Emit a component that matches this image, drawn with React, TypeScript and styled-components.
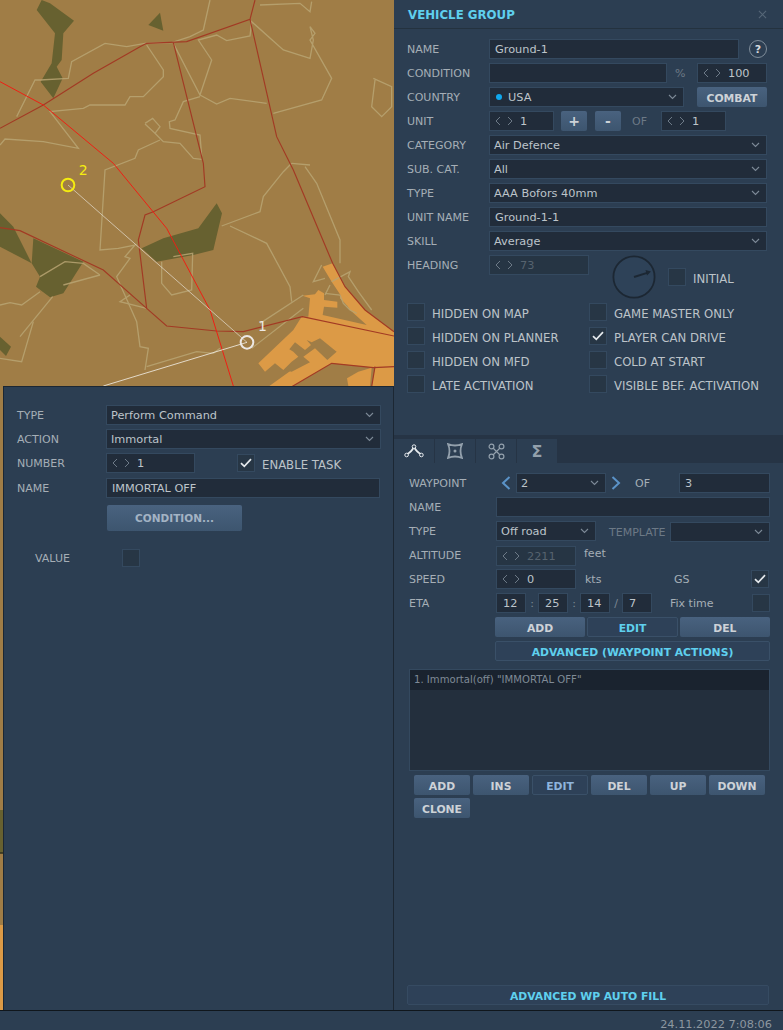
import styled, { createGlobalStyle } from 'styled-components'

const GlobalStyle = createGlobalStyle`
  html, body {
    margin: 0;
    height: 100%;
    background: #2c3e52;
    overflow: hidden;
  }
  body, input, select, button {
    font-family: "DejaVu Sans", sans-serif;
  }
`

const Chevron = () => (
  <svg width="9" height="6" viewBox="0 0 9 6">
    <path d="M1 1 L4.5 4.5 L8 1" fill="none" stroke="#7d8a97" strokeWidth="1.1" />
  </svg>
)

const Tick = () => (
  <svg width="12" height="10" viewBox="0 0 12 10">
    <path d="M1 5.2 L4.3 8.4 L11 1.2" fill="none" stroke="#e4e8ec" strokeWidth="1.7" />
  </svg>
)

const SpinArrows = () => (
  <svg width="18" height="10" viewBox="0 0 18 10">
    <path d="M5 1 L1 5 L5 9 M13 1 L17 5 L13 9" fill="none" stroke="#6d7a87" strokeWidth="1" />
  </svg>
)

function Select({ w, children, dot }: { w: number; children?: React.ReactNode; dot?: boolean }) {
  return (
    <SelectBox $w={w}>
      {dot && <Dot />}
      <span>{children}</span>
      <Chevron />
    </SelectBox>
  )
}

function Spin({ w, value, off }: { w: number; value: string; off?: boolean }) {
  return (
    <SpinBox $w={w} $off={off}>
      <SpinArrows />
      <span>{value}</span>
    </SpinBox>
  )
}

function Check({ on, children }: { on?: boolean; children?: React.ReactNode }) {
  return (
    <CheckLabel>
      <CheckBox>{on && <Tick />}</CheckBox>
      <CheckText>{children}</CheckText>
    </CheckLabel>
  )
}

function MapView() {
  const tan = [
    '630,0 610,90 570,110 515,128 435,130 380,140 315,130 215,185 205,235 120,240 105,240 50,350',
    '440,135 490,210 490,230 430,290 390,290 375,315 270,315 250,325 150,335 235,445 130,425 15,417 0,435',
    '520,130 600,285 635,180 595,120 650,105 680,122 750,108 755,65 850,150 930,175 940,120 930,80 945,100 930,120 995,235 965,300 820,340',
    '600,285 650,312 690,295 800,310',
    '600,290 550,305 525,360 508,365 510,385 600,405 605,470',
    '435,370 458,355 480,380 465,400 435,372',
    '465,400 490,425 540,430 580,475 605,478',
    '480,420 415,450 405,475 315,510 300,750 355,745 405,735 375,770 390,775 350,830 410,965 420,1040 445,1045 435,1110',
    '875,490 930,495',
    '915,500 950,550 1020,720 1020,790',
    '875,490 850,515 790,590 780,635 665,678',
    '690,678 800,730 870,860 875,905',
    '485,785 485,850 515,885 575,870 578,760 520,770',
    '300,825 190,855',
    '120,830 195,785 250,790 300,825',
    '158,890 60,1010',
    '100,965 65,1085 0,1075',
    '0,915 30,908 65,915 120,875',
    '440,925 360,905 390,885',
    '1120,235 1175,260 1175,320 1145,350 1115,320 1125,240',
    '780,15 900,10 930,35 935,5',
    '910,885 780,970',
    '910,925 755,1045',
    '440,1100 590,1055 640,1060 660,1045',
    '965,795 940,845 975,835',
    '995,845 1050,815 1045,830 1075,875 1115,930',
    '975,880 1020,885 1030,910 1050,930 1070,940',
    '990,855 975,885',
  ]
  const darkRed = [
    '0,385 130,315 280,220 420,140 440,130 560,125 750,58 765,0',
    '520,128 610,490 615,560 460,635 435,645 415,720 440,925',
    '750,58 830,410 880,510 998,790 1035,860 1095,930 1182,995',
    '0,683 60,692 310,810 440,925 500,978 650,993 730,995 907,950 1182,1008',
    '875,1160 995,1090 1120,1103 1182,1100',
    '1125,1100 1115,1160',
  ]
  return (
    <MapSvg viewBox="0 0 1182 3030">
      <rect width="1182" height="3030" fill="#a07d46" />
      <g fill="#676130">
        <polygon points="110,30 125,0 150,10 222,62 190,100 185,180 170,200 188,235 160,295 122,245 155,190 165,100" />
        <polygon points="445,75 480,38 490,92" />
        <polygon points="425,745 490,715 595,685 650,610 666,640 640,750 580,765 470,785" />
        <polygon points="0,640 40,680 95,790 0,740" />
        <polygon points="100,715 250,785 190,880 150,892 108,860 120,830 95,790" />
        <polygon points="0,1010 33,1040 18,1068 0,1050" />
        <rect y="2430" width="12" height="130" />
        <rect y="2880" width="12" height="18" />
      </g>
      <rect y="2557" width="12" height="4" fill="#2a2a1c" />
      <g fill="#dc9a46">
        <polygon points="775,1090 880,990 905,950 925,950 930,895 908,887 945,883 955,870 972,880 972,900 1012,905 1012,923 972,920 968,945 1100,975 1050,930 1015,875 995,845 968,800 998,790 1035,860 1095,930 1182,995 1182,1103 1125,1103 995,1090 875,1160 805,1160 875,1110 850,1110 825,1090 795,1115" />
        <polygon points="1025,875 1050,890 1062,895 1040,915 1020,895" />
        <polygon points="1041,1135 1075,1115 1115,1103 1110,1158 1045,1158" />
        <polygon points="1125,1103 1182,1100 1182,1160 1115,1160" />
        <rect y="2775" width="12" height="255" />
      </g>
      <polygon points="868,1048 885,1027 915,1050 933,1035 920,1020 935,1027 960,1015 1010,1055 982,1080 945,1045 910,1070 930,1087 875,1115 850,1110 875,1085 895,1070 880,1055" fill="#a07d46" />
      <g fill="none" stroke="#b9a573" strokeWidth="4" opacity="0.85">
        {tan.map(p => <polyline key={p} points={p} />)}
      </g>
      <g fill="none" stroke="#a23a24" strokeWidth="3.5">
        {darkRed.map(p => <polyline key={p} points={p} />)}
      </g>
      <polyline points="0,245 130,315 340,490 500,685 630,930 700,1158" fill="none" stroke="#ee1f14" strokeWidth="3" />
      <line x1="204" y1="555" x2="741" y2="1027" stroke="#e8e4da" strokeWidth="2" />
      <line x1="310" y1="1158" x2="741" y2="1027" stroke="#f0ece2" strokeWidth="2.5" />
      <circle cx="204" cy="555" r="19" fill="none" stroke="#f4ec10" strokeWidth="6" />
      <circle cx="741" cy="1027" r="19" fill="none" stroke="#ece8e4" strokeWidth="6" />
      <MapLabel x="236" y="524" fill="#f4ec10">2</MapLabel>
      <MapLabel x="774" y="994" fill="#ece8e4">1</MapLabel>
    </MapSvg>
  )
}

export default function App() {
  return (
    <Page>
      <GlobalStyle />
      <Main>
        <MapColumn>
          <MapView />
          <TaskPanel>
            <Row>
              <TaskLabel>TYPE</TaskLabel>
              <Select w={275}>Perform Command</Select>
            </Row>
            <Row>
              <TaskLabel>ACTION</TaskLabel>
              <Select w={275}>Immortal</Select>
            </Row>
            <Row>
              <TaskLabel>NUMBER</TaskLabel>
              <Spin w={89} value="1" />
              <EnableTask>
                <Check on>ENABLE TASK</Check>
              </EnableTask>
            </Row>
            <NameRow>
              <TaskLabel>NAME</TaskLabel>
              <Input $w={274}>IMMORTAL OFF</Input>
            </NameRow>
            <ConditionButton>CONDITION...</ConditionButton>
            <ValueRow>
              <ValueLabel>VALUE</ValueLabel>
              <CheckBox />
            </ValueRow>
          </TaskPanel>
        </MapColumn>

        <Side>
          <Header>
            <Title>VEHICLE GROUP</Title>
            <CloseIcon viewBox="0 0 10 10">
              <path d="M1 1 L9 9 M9 1 L1 9" stroke="#566778" strokeWidth="1.2" />
            </CloseIcon>
          </Header>

          <GroupForm>
            <Row>
              <Label>NAME</Label>
              <Input $w={250}>Ground-1</Input>
              <Help>?</Help>
            </Row>
            <Row>
              <Label>CONDITION</Label>
              <Input $w={178} />
              <Percent>%</Percent>
              <Spin w={70} value="100" />
            </Row>
            <Row>
              <Label>COUNTRY</Label>
              <Select w={195} dot>USA</Select>
              <CombatButton>COMBAT</CombatButton>
            </Row>
            <Row>
              <Label>UNIT</Label>
              <Spin w={65} value="1" />
              <StepButton>+</StepButton>
              <StepButton>-</StepButton>
              <OfLabel>OF</OfLabel>
              <Spin w={65} value="1" />
            </Row>
            <Row>
              <Label>CATEGORY</Label>
              <Select w={278}>Air Defence</Select>
            </Row>
            <Row>
              <Label>SUB. CAT.</Label>
              <Select w={278}>All</Select>
            </Row>
            <Row>
              <Label>TYPE</Label>
              <Select w={278}>AAA Bofors 40mm</Select>
            </Row>
            <Row>
              <Label>UNIT NAME</Label>
              <Input $w={278}>Ground-1-1</Input>
            </Row>
            <Row>
              <Label>SKILL</Label>
              <Select w={278}>Average</Select>
            </Row>
            <HeadingRow>
              <HeadingLeft>
                <Label>HEADING</Label>
                <Spin w={100} value="73" off />
              </HeadingLeft>
              <Dial viewBox="0 0 44 44">
                <circle cx="22" cy="22" r="20.6" fill="#2e4258" stroke="#1c2733" strokeWidth="1.8" />
                <path d="M22 22 L36 17.6" stroke="#1c2733" strokeWidth="2" />
                <path d="M39 16.5 L33.5 15 L35 20.5 Z" fill="#1c2733" />
              </Dial>
              <InitialCheck>
                <Check>INITIAL</Check>
              </InitialCheck>
            </HeadingRow>
            <Options>
              <Check>HIDDEN ON MAP</Check>
              <Check>GAME MASTER ONLY</Check>
              <Check>HIDDEN ON PLANNER</Check>
              <Check on>PLAYER CAN DRIVE</Check>
              <Check>HIDDEN ON MFD</Check>
              <Check>COLD AT START</Check>
              <Check>LATE ACTIVATION</Check>
              <Check>VISIBLE BEF. ACTIVATION</Check>
            </Options>
          </GroupForm>

          <TabBar>
            <Tab>
              <svg width="20" height="14" viewBox="0 0 20 14">
                <path d="M3 10 Q7 8.5 10 3 Q13 8.5 17 10" fill="none" stroke="#e6eaee" strokeWidth="1.8" />
                <circle cx="2.6" cy="11" r="1.8" fill="#2c3e52" stroke="#e6eaee" />
                <circle cx="10" cy="2.6" r="1.8" fill="#2c3e52" stroke="#e6eaee" />
                <circle cx="17.4" cy="11" r="1.8" fill="#2c3e52" stroke="#e6eaee" />
              </svg>
            </Tab>
            <Tab>
              <svg width="16" height="16" viewBox="0 0 16 16">
                <path d="M1 1 Q8 4 15 1 Q12 8 15 15 Q8 12 1 15 Q4 8 1 1 Z" fill="none" stroke="#93a0ac" strokeWidth="1.8" />
                <circle cx="8" cy="8" r="1.5" fill="#93a0ac" />
              </svg>
            </Tab>
            <Tab>
              <svg width="17" height="17" viewBox="0 0 17 17">
                <path d="M5 5 L12 12 M12 5 L5 12" stroke="#93a0ac" strokeWidth="1.2" />
                <circle cx="3.5" cy="3.5" r="2.4" fill="none" stroke="#93a0ac" strokeWidth="1.2" />
                <circle cx="13.5" cy="3.5" r="2.4" fill="none" stroke="#93a0ac" strokeWidth="1.2" />
                <circle cx="3.5" cy="13.5" r="2.4" fill="none" stroke="#93a0ac" strokeWidth="1.2" />
                <circle cx="13.5" cy="13.5" r="2.4" fill="none" stroke="#93a0ac" strokeWidth="1.2" />
              </svg>
            </Tab>
            <Tab>
              <Sigma>Σ</Sigma>
            </Tab>
          </TabBar>

          <WaypointForm>
            <Row>
              <WpLabel>WAYPOINT</WpLabel>
              <NavArrow viewBox="0 0 10 14" $prev>
                <path d="M8.5 1 L2 7 L8.5 13" fill="none" stroke="#5b93c8" strokeWidth="2" />
              </NavArrow>
              <Select w={90}>2</Select>
              <NavArrow viewBox="0 0 10 14">
                <path d="M1.5 1 L8 7 L1.5 13" fill="none" stroke="#5b93c8" strokeWidth="2" />
              </NavArrow>
              <WpOf>OF</WpOf>
              <Input $w={91}>3</Input>
            </Row>
            <Row>
              <WpLabel>NAME</WpLabel>
              <Input $w={274} />
            </Row>
            <Row>
              <WpLabel>TYPE</WpLabel>
              <Select w={100}>Off road</Select>
              <Template>TEMPLATE</Template>
              <TemplateSelect>
                <Select w={100} />
              </TemplateSelect>
            </Row>
            <Row>
              <WpLabel>ALTITUDE</WpLabel>
              <AltitudeSpin>
                <Spin w={80} value="2211" off />
              </AltitudeSpin>
              <Feet>feet</Feet>
            </Row>
            <Row>
              <WpLabel>SPEED</WpLabel>
              <Spin w={80} value="0" />
              <Kts>kts</Kts>
              <Gs>GS</Gs>
              <CheckBox><Tick /></CheckBox>
            </Row>
            <Row>
              <WpLabel>ETA</WpLabel>
              <TimeField $w={30}>12</TimeField>
              <TimeSep>:</TimeSep>
              <TimeField $w={30}>25</TimeField>
              <TimeSep>:</TimeSep>
              <TimeField $w={30}>14</TimeField>
              <TimeSep>/</TimeSep>
              <TimeField $w={30}>7</TimeField>
              <FixTime>Fix time</FixTime>
              <CheckBox />
            </Row>
            <WpActions>
              <Button>ADD</Button>
              <OutlineButton>EDIT</OutlineButton>
              <Button>DEL</Button>
            </WpActions>
            <AdvancedButton>ADVANCED (WAYPOINT ACTIONS)</AdvancedButton>
            <ActionList>
              <ActionItem>1. Immortal(off) "IMMORTAL OFF"</ActionItem>
            </ActionList>
            <ListButtons>
              <Button>ADD</Button>
              <Button>INS</Button>
              <FlatButton>EDIT</FlatButton>
              <Button>DEL</Button>
              <Button>UP</Button>
              <Button>DOWN</Button>
              <Button>CLONE</Button>
            </ListButtons>
          </WaypointForm>

          <AutoFill>ADVANCED WP AUTO FILL</AutoFill>
        </Side>
      </Main>
      <StatusBar>24.11.2022 7:08:06</StatusBar>
    </Page>
  )
}

// ----- STYLES -----

const Page = styled.div`
  width: 783px;
  height: 1030px;
  overflow: hidden;
  background: #2c3e52;
`

const Main = styled.div`
  display: grid;
  grid-template-columns: 394px 389px;
  height: 1010px;
`

const MapColumn = styled.div`
  position: relative;
  overflow: hidden;
`

const MapSvg = styled.svg`
  display: block;
  width: 394px;
  height: 1010px;
`

const MapLabel = styled.text`
  font-family: "DejaVu Sans", sans-serif;
  font-size: 42px;
`

const TaskPanel = styled.div`
  position: absolute;
  left: 3px;
  top: 386px;
  right: 0;
  bottom: 0;
  box-sizing: border-box;
  padding: 18px 0 0 13px;
  background: #2c3e52;
  border: 1px solid #1c2733;
  border-bottom: none;
  display: flex;
  flex-direction: column;
  gap: 4px;
`

const Row = styled.div`
  display: flex;
  align-items: center;
  height: 20px;
`

const NameRow = styled(Row)`
  margin-top: 1px;
`

const SmallText = styled.div`
  box-sizing: border-box;
  flex: none;
  padding-top: 1px;
  font-size: 11px;
  color: #a5aeb6;
  white-space: nowrap;
`

const DimText = styled(SmallText)`
  color: #6c7986;
`

const Label = styled(SmallText)`
  width: 82px;
`

const TaskLabel = styled(Label)`
  width: 89px;
`

const WpLabel = styled(Label)`
  width: 87px;
`

const Field = styled.div<{ $w: number }>`
  box-sizing: border-box;
  flex: none;
  width: ${({ $w }) => $w}px;
  height: 20px;
  display: flex;
  align-items: center;
  background: #212c3a;
  border: 1px solid #34495f;
  font-size: 11.3px;
  color: #bdc4ca;
  white-space: nowrap;
`

const Input = styled(Field)`
  padding: 1px 0 0 5px;
`

const SelectBox = styled(Field)`
  padding: 0 6px 0 4px;

  span {
    flex: 1;
    padding-top: 1px;
  }
`

const Dot = styled.i`
  width: 6px;
  height: 6px;
  margin: 0 6px 0 2px;
  border-radius: 50%;
  background: #0fa8ee;
`

const SpinBox = styled(Field)<{ $off?: boolean }>`
  padding-left: 5px;
  gap: 7px;
  color: ${({ $off }) => ($off ? '#56636f' : '#bdc4ca')};
  background: ${({ $off }) => ($off ? '#263544' : '#212c3a')};

  span {
    padding-top: 1px;
  }
`

const CheckLabel = styled.label`
  display: flex;
  align-items: center;
  gap: 7px;
  height: 18px;
`

const CheckText = styled.span`
  padding-top: 3px;
  font-size: 11.7px;
  color: #bcc3c9;
  white-space: nowrap;
`

const CheckBox = styled.div`
  box-sizing: border-box;
  flex: none;
  width: 18px;
  height: 18px;
  display: flex;
  align-items: center;
  justify-content: center;
  background: #273645;
  border: 1px solid #34495f;
`

const Button = styled.button`
  box-sizing: border-box;
  height: 20px;
  padding: 2px 0 0;
  border: none;
  border-radius: 2px;
  background: linear-gradient(#49627f, #3d556f);
  font-size: 10.8px;
  font-weight: bold;
  color: #cdd2d7;
`

const OutlineButton = styled(Button)`
  background: #2e4158;
  border: 1px solid #3a5068;
  color: #5fd0ee;
`

const FlatButton = styled(OutlineButton)`
  color: #8eb4dc;
`

const EnableTask = styled.div`
  margin-left: 42px;
`

const ConditionButton = styled(Button)`
  width: 135px;
  height: 26px;
  margin: 3px 0 0 90px;
  padding: 0;
  font-size: 10.5px;
  color: #a3b3c4;
`

const ValueRow = styled.div`
  display: flex;
  align-items: center;
  margin: 14px 0 0 18px;
`

const ValueLabel = styled(SmallText)`
  width: 87px;
`

const Side = styled.div`
  display: flex;
  flex-direction: column;
  background: #2c3e52;
`

const Header = styled.div`
  flex: none;
  height: 28px;
  padding: 0 16px 0 14px;
  display: flex;
  align-items: center;
  justify-content: space-between;
  border-bottom: 1px solid #24323f;
`

const Title = styled.div`
  padding-top: 2px;
  font-size: 11.8px;
  font-weight: bold;
  color: #5fd0ee;
`

const CloseIcon = styled.svg`
  width: 9px;
  height: 9px;
`

const GroupForm = styled.div`
  flex: none;
  box-sizing: border-box;
  height: 406px;
  padding: 10px 16px 0 13px;
  display: flex;
  flex-direction: column;
  gap: 4px;
`

const Help = styled.div`
  box-sizing: border-box;
  width: 18px;
  height: 18px;
  margin-left: 10px;
  display: flex;
  align-items: center;
  justify-content: center;
  border: 1.5px solid #7f8d9a;
  border-radius: 50%;
  font-size: 11px;
  font-weight: bold;
  color: #d5dade;
`

const Percent = styled(DimText)`
  width: 30px;
  padding-left: 8px;
`

const CombatButton = styled(Button)`
  width: 70px;
  margin-left: 13px;
`

const StepButton = styled(Button)`
  width: 26px;
  margin-left: 7px;
  padding: 0;
  font-size: 14px;
  & + & {
    margin-left: 8px;
  }
`

const OfLabel = styled(DimText)`
  width: 40px;
  padding-left: 11px;
`

const HeadingRow = styled.div`
  display: flex;
  align-items: center;
  height: 44px;
`

const HeadingLeft = styled(Row)`
  align-self: flex-start;
`

const Dial = styled.svg`
  width: 44px;
  height: 44px;
  margin-left: 23px;
  flex: none;
`

const InitialCheck = styled.div`
  margin-left: 12px;
`

const Options = styled.div`
  display: grid;
  grid-template-columns: 182px 1fr;
  row-gap: 6px;
`

const TabBar = styled.div`
  flex: none;
  height: 28px;
  box-sizing: border-box;
  padding-top: 4px;
  display: flex;
  background: #263445;
`

const Tab = styled.div`
  box-sizing: border-box;
  width: 41px;
  height: 24px;
  display: flex;
  align-items: center;
  justify-content: center;
  background: #2c3e52;
  border-right: 1px solid #263445;
`

const Sigma = styled.span`
  font-size: 16px;
  font-weight: bold;
  color: #93a0ac;
`

const WaypointForm = styled.div`
  padding: 10px 13px 0 15px;
  display: flex;
  flex-direction: column;
  gap: 4px;
`

const NavArrow = styled.svg<{ $prev?: boolean }>`
  width: 10px;
  height: 14px;
  flex: none;
  margin: ${({ $prev }) => ($prev ? '0 5px 0 5px' : '0 0 0 5px')};
`

const WpOf = styled(SmallText)`
  width: 58px;
  padding-left: 14px;
`

const Template = styled(DimText)`
  width: 74px;
  padding-left: 13px;
  margin-top: 2px;
`

const TemplateSelect = styled.div`
  margin-top: 1px;
`

const AltitudeSpin = styled.div`
  margin-top: 1px;
`

const Feet = styled(SmallText)`
  margin: -4px 0 0 8px;
`

const Kts = styled(SmallText)`
  width: 98px;
  padding-left: 9px;
`

const Gs = styled(SmallText)`
  width: 77px;
`

const TimeField = styled(Input)`
  padding-left: 6px;
`

const TimeSep = styled(SmallText)`
  width: 12px;
  text-align: center;
  color: #7c8894;
`

const FixTime = styled(SmallText)`
  width: 100px;
  padding-left: 18px;
`

const WpActions = styled.div`
  margin-left: 86px;
  display: grid;
  grid-template-columns: repeat(3, 1fr);
  gap: 2px;
`

const AdvancedButton = styled(OutlineButton)`
  margin-left: 86px;
`

const ActionList = styled.div`
  box-sizing: border-box;
  height: 102px;
  margin-top: 4px;
  background: #232f3d;
  border: 1px solid #34495f;
`

const ActionItem = styled.div`
  height: 20px;
  line-height: 20px;
  padding-left: 4px;
  background: #1a232f;
  font-size: 10.1px;
  color: #7f8a96;
  white-space: nowrap;
`

const ListButtons = styled.div`
  padding-left: 5px;
  display: grid;
  grid-template-columns: repeat(6, 56px);
  gap: 3px;
`

const AutoFill = styled(OutlineButton)`
  margin: auto 14px 5px 13px;
  flex: none;
  border-color: #364b62;
`

const StatusBar = styled.div`
  box-sizing: border-box;
  height: 20px;
  overflow: hidden;
  padding: 7px 11px 0 0;
  border-top: 1px solid #10161c;
  background: #2c3e52;
  text-align: right;
  font-size: 11.3px;
  color: #8d97a0;
`
